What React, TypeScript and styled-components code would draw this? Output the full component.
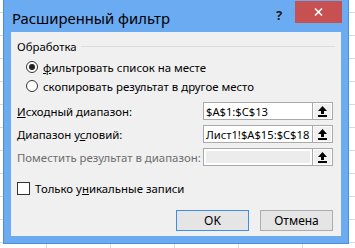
import React from 'react'
import styled, { createGlobalStyle } from 'styled-components'

const GlobalStyle = createGlobalStyle`
  html, body {
    margin: 0;
    padding: 0;
  }
  body {
    width: 355px;
    height: 248px;
    overflow: hidden;
    background-color: #fff;
    background-image:
      linear-gradient(#d9d9d9 1px, transparent 1px),
      linear-gradient(90deg, #d9d9d9 1px, transparent 1px);
    background-size: 64px 23px;
    background-position: 46px 12px;
    font-family: 'Noto Sans', 'Liberation Sans', sans-serif;
    font-size: 11.4px;
    color: #000;
  }
`

const Window = styled.div`
  box-sizing: border-box;
  width: 346px;
  height: 244px;
  margin-left: 3px;
  background: #6aabf2;
  border: 1px solid #4d8ed8;
  border-top: none;
  padding: 0 7px 7px;
  display: flex;
  flex-direction: column;
`

const TitleBar = styled.div`
  height: 32px;
  display: flex;
  align-items: flex-start;
`

const Title = styled.div`
  flex: 1;
  padding: 8px 0 0 1px;
  font-size: 14.8px;
  color: #000;
`

const HelpButton = styled.div`
  width: 16px;
  margin-top: 6px;
  margin-right: 8px;
  font-size: 13px;
  font-weight: bold;
  color: #1a1a1a;
  text-align: center;
`

const CloseButton = styled.div`
  width: 47px;
  height: 22px;
  margin-top: 1px;
  margin-right: -1px;
  background: #c75050;
  display: flex;
  align-items: center;
  justify-content: center;
`

const Content = styled.div`
  flex: 1;
  background: #f0f0f0;
  padding: 6px 6px 0 6px;
  display: flex;
  flex-direction: column;
  white-space: nowrap;
`

const GroupHeader = styled.div`
  display: flex;
  align-items: center;
  height: 16px;
  gap: 4px;
`

const GroupLine = styled.div`
  flex: 1;
  height: 1px;
  background: #dcdcdc;
`

const RadioList = styled.div`
  display: flex;
  flex-direction: column;
  gap: 3px;
  padding: 5px 0 0 9px;
`

const OptionRow = styled.label`
  display: flex;
  align-items: center;
  gap: 5px;
  height: 16px;
`

const Radio = styled.span<{ $checked?: boolean }>`
  box-sizing: border-box;
  width: 12px;
  height: 12px;
  border-radius: 50%;
  border: 1px solid #333;
  background: #fff;
  display: flex;
  align-items: center;
  justify-content: center;
  &::after {
    content: '';
    display: ${(p) => (p.$checked ? 'block' : 'none')};
    width: 6px;
    height: 6px;
    border-radius: 50%;
    background: #222;
  }
`

const U = styled.span`
  text-decoration: underline;
`

const Fields = styled.div`
  display: grid;
  grid-template-columns: 186px 130px;
  row-gap: 5px;
  margin-top: 8px;
  align-items: center;
`

const FieldLabel = styled.div<{ $disabled?: boolean }>`
  color: ${(p) => (p.$disabled ? '#6d6d6d' : '#000')};
`

const RefBox = styled.div`
  display: flex;
  height: 18px;
`

const RefInput = styled.div<{ $disabled?: boolean }>`
  box-sizing: border-box;
  flex: 1;
  border: 1px solid #a9a9a9;
  border-right: none;
  background: #fff;
  padding: ${(p) => (p.$disabled ? '2px' : '0 2px')};
  display: flex;
  align-items: center;
  overflow: hidden;
  font-size: 11.2px;
`

const DisabledFill = styled.div`
  flex: 1;
  align-self: stretch;
  background: #ececec;
`

const Caret = styled.span`
  display: inline-block;
  width: 1px;
  height: 14px;
  background: #000;
  margin-left: 1px;
`

const PickButton = styled.div`
  box-sizing: border-box;
  width: 21px;
  border: 1px solid #a9a9a9;
  background: #f0f0f0;
  box-shadow: inset 0 0 0 1px #fff;
  display: flex;
  align-items: center;
  justify-content: center;
`

const CheckRow = styled.label`
  display: flex;
  align-items: center;
  gap: 5px;
  margin-top: 14px;
  height: 16px;
`

const Checkbox = styled.span`
  box-sizing: border-box;
  width: 13px;
  height: 13px;
  border: 1px solid #333;
  background: #fff;
`

const ButtonRow = styled.div`
  display: flex;
  justify-content: flex-end;
  gap: 11px;
  margin-top: 14px;
  padding-right: 2px;
`

const Button = styled.div<{ $default?: boolean }>`
  box-sizing: border-box;
  width: 73px;
  height: 21px;
  border: 1px solid ${(p) => (p.$default ? '#3c8ee6' : '#adadad')};
  background: #e5e5e5;
  display: flex;
  align-items: center;
  justify-content: center;
  font-size: 12px;
`

const ArrowIcon = () => (
  <svg width="9" height="11" viewBox="0 0 9 11">
    <polygon points="4.5,0 9,5 6,5 6,8 3,8 3,5 0,5" fill="#000" />
    <rect x="0" y="9" width="9" height="2" fill="#000" />
  </svg>
)

const CloseIcon = () => (
  <svg width="9" height="8" viewBox="0 0 9 8">
    <path d="M1 0.5 L8 7.5 M8 0.5 L1 7.5" stroke="#fff" strokeWidth="1.6" />
  </svg>
)

const RefField = ({ value, caret, disabled }: { value?: string; caret?: boolean; disabled?: boolean }) => (
  <RefBox>
    <RefInput $disabled={disabled}>
      {disabled ? <DisabledFill /> : value}
      {caret && <Caret />}
    </RefInput>
    <PickButton>
      <ArrowIcon />
    </PickButton>
  </RefBox>
)

export default function App() {
  return (
    <>
      <GlobalStyle />
      <Window>
        <TitleBar>
          <Title>Расширенный фильтр</Title>
          <HelpButton>?</HelpButton>
          <CloseButton>
            <CloseIcon />
          </CloseButton>
        </TitleBar>
        <Content>
          <GroupHeader>
            <span>Обработка</span>
            <GroupLine />
          </GroupHeader>
          <RadioList>
            <OptionRow>
              <Radio $checked />
              <span>
                <U>ф</U>ильтровать список на месте
              </span>
            </OptionRow>
            <OptionRow>
              <Radio />
              <span>скопировать результат в другое место</span>
            </OptionRow>
          </RadioList>
          <Fields>
            <FieldLabel>
              <U>И</U>сходный диапазон:
            </FieldLabel>
            <RefField value="$A$1:$C$13" />
            <FieldLabel>
              Диапазон у<U>с</U>ловий:
            </FieldLabel>
            <RefField value="Лист1!$A$15:$C$18" caret />
            <FieldLabel $disabled>Поместить результат в диапазон:</FieldLabel>
            <RefField disabled />
          </Fields>
          <CheckRow>
            <Checkbox />
            <span>
              Только у<U>н</U>икальные записи
            </span>
          </CheckRow>
          <ButtonRow>
            <Button $default>OK</Button>
            <Button>Отмена</Button>
          </ButtonRow>
        </Content>
      </Window>
    </>
  )
}
